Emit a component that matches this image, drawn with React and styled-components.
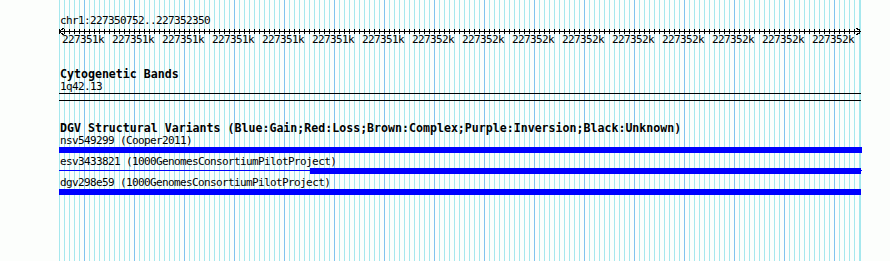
import React from 'react';
import styled, { createGlobalStyle } from 'styled-components';

const MINOR = '#a6e8ee';
const MAJOR = '#80c4ee';
const FEATURE = '#0000ff';

const GlobalStyle = createGlobalStyle`
  html, body {
    margin: 0;
    padding: 0;
    background: #fcfefc;
  }
`;

const Page = styled.div`
  display: flex;
  height: 261px;
  overflow: hidden;
  font-family: "DejaVu Sans Mono", "Liberation Mono", monospace;
  color: #000;
`;

// the grid of the browser image, minor line every 5px, major every 50px
const Panel = styled.div`
  margin-left: 59px;
  width: 801px;
  height: 261px;
  border-right: 1px solid ${MINOR};
  padding-top: 16px;
  box-sizing: content-box;
  display: flex;
  flex-direction: column;
  background-image:
    linear-gradient(to right, ${MAJOR} 1px, transparent 1px),
    linear-gradient(to right, ${MINOR} 1px, transparent 1px);
  background-size: 50px 100%, 5px 100%;
  background-position: 25px 0, 0 0;
`;

// gd small font is 6px a cell, so a slightly larger face is pulled in
const Small = styled.div`
  font-size: 11px;
  letter-spacing: -0.62px;
  line-height: 10px;
  height: 10px;
  white-space: pre;
  margin-left: 1px;
  margin-top: ${p => p.$top || 0}px;
`;

const Title = styled.div`
  font-size: 11.6px;
  font-weight: bold;
  line-height: 12px;
  height: 12px;
  white-space: pre;
  margin-left: 1px;
  margin-top: ${p => p.$top || 0}px;
`;

const RulerSvg = styled.svg`
  display: block;
  width: 803px;
  height: 9px;
`;

const Labels = styled.div`
  display: flex;
  padding-left: 3px;
  height: 10px;
`;

const Label = styled.span`
  width: 50px;
  flex: none;
  font-size: 11px;
  letter-spacing: -0.62px;
  line-height: 10px;
`;

const Rule = styled.div`
  width: 802px;
  height: 1px;
  background: #000;
  margin-top: ${p => p.$top}px;
`;

const Track = styled.div`
  display: flex;
  flex-direction: column;
  margin-top: ${p => p.$top}px;
`;

const Lane = styled.div`
  display: flex;
  height: 6px;
  margin-top: 1px;
`;

const Connector = styled.div`
  width: ${p => p.$width}px;
  height: 1px;
  margin-top: 2px;
  background: ${FEATURE};
  flex: none;
`;

const Block = styled.div`
  width: ${p => p.$width}px;
  height: 6px;
  background: ${FEATURE};
  flex: none;
`;

const EndTick = styled.div`
  width: 1px;
  height: 1px;
  margin-top: 2px;
  background: ${FEATURE};
  flex: none;
`;

const labels = [
  ...Array(7).fill('227351k'),
  ...Array(9).fill('227352k'),
];

const tracks = [
  { id: 'nsv549299', src: 'Cooper2011', start: 0, end: 803 },
  { id: 'esv3433821', src: '1000GenomesConsortiumPilotProject', start: 251, end: 802, tick: true },
  { id: 'dgv298e59', src: '1000GenomesConsortiumPilotProject', start: 0, end: 802 },
];

function Ruler() {
  const ticks = [];
  for (let x = 0; x <= 800; x += 5) {
    ticks.push(<line key={x} x1={x + 0.5} x2={x + 0.5} y1={3} y2={8} stroke="#000" />);
  }
  return (
    <RulerSvg viewBox="0 0 803 9" shapeRendering="crispEdges">
      <line x1={0} x2={802} y1={5.5} y2={5.5} stroke="#000" />
      {ticks}
      <polyline points="4.5,2 0.5,5.5 4.5,9" fill="none" stroke="#000" />
      <polyline points="797.5,2 801.5,5.5 797.5,9" fill="none" stroke="#000" />
    </RulerSvg>
  );
}

export default function App() {
  return (
    <Page>
      <GlobalStyle />
      <Panel>
        <Small>chr1:227350752..227352350</Small>
        <Ruler />
        <Labels>
          {labels.map((l, i) => <Label key={i}>{l}</Label>)}
        </Labels>

        <Title $top={23}>Cytogenetic Bands</Title>
        <Small $top={2}>1q42.13</Small>
        <Rule $top={1} />
        <Rule $top={6} />

        <Title $top={21}>DGV Structural Variants (Blue:Gain;Red:Loss;Brown:Complex;Purple:Inversion;Black:Unknown)</Title>
        {tracks.map((t, i) => (
          <Track key={t.id} $top={i === 0 ? 2 : 4}>
            <Small>{t.id} ({t.src})</Small>
            <Lane>
              {t.start > 0 && <Connector $width={t.start} />}
              <Block $width={t.end - t.start} />
              {t.tick && <EndTick />}
            </Lane>
          </Track>
        ))}
      </Panel>
    </Page>
  );
}
